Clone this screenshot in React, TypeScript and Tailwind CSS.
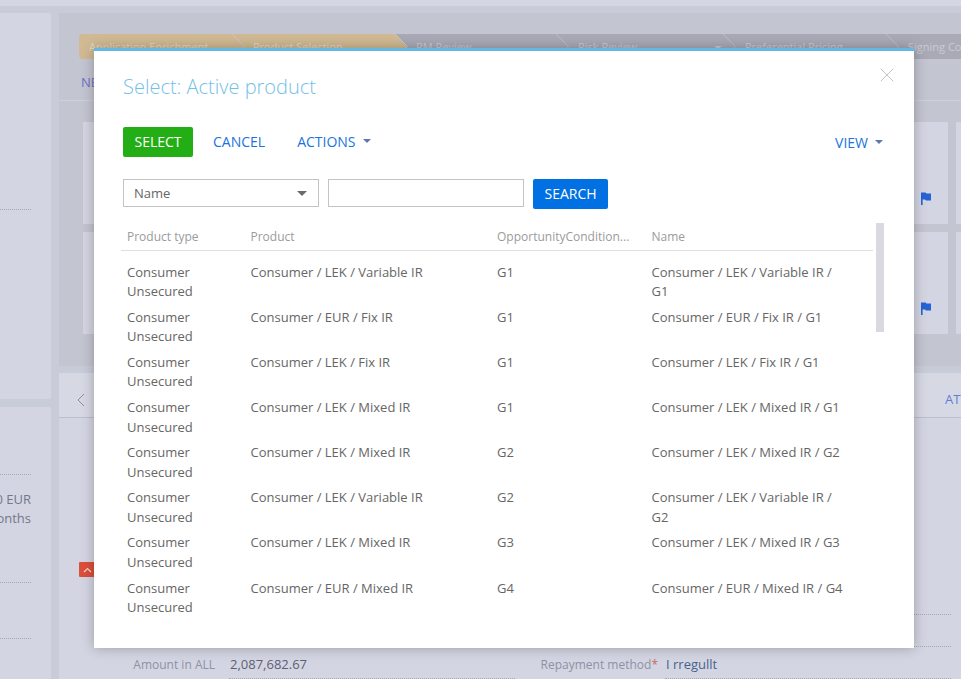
import { X } from 'lucide-react';

const rows = [
  { product: 'Consumer / LEK / Variable IR', cond: 'G1', name: 'Consumer / LEK / Variable IR / G1' },
  { product: 'Consumer / EUR / Fix IR', cond: 'G1', name: 'Consumer / EUR / Fix IR / G1' },
  { product: 'Consumer / LEK / Fix IR', cond: 'G1', name: 'Consumer / LEK / Fix IR / G1' },
  { product: 'Consumer / LEK / Mixed IR', cond: 'G1', name: 'Consumer / LEK / Mixed IR / G1' },
  { product: 'Consumer / LEK / Mixed IR', cond: 'G2', name: 'Consumer / LEK / Mixed IR / G2' },
  { product: 'Consumer / LEK / Variable IR', cond: 'G2', name: 'Consumer / LEK / Variable IR / G2' },
  { product: 'Consumer / LEK / Mixed IR', cond: 'G3', name: 'Consumer / LEK / Mixed IR / G3' },
  { product: 'Consumer / EUR / Mixed IR', cond: 'G4', name: 'Consumer / EUR / Mixed IR / G4' },
];

const stages = [
  { label: 'Application Enrichment', box: 'w-[153px] pl-[10px] z-[6]', done: true },
  { label: 'Product Selection', box: 'w-[163px] pl-[21px] z-[5]', done: true },
  { label: 'RM Review', box: 'w-[161px] pl-[21px] z-[4]', done: false },
  { label: 'Risk Review', box: 'w-[167px] pl-[22px] z-[3]', done: false, menu: true },
  { label: 'Preferential Pricing', box: 'w-[163px] pl-[22px] z-[2]', done: false },
  { label: 'Signing Conditions', box: 'w-[170px] pl-[22px] z-[1]', done: false },
];

const Caret = ({ className }: { className: string }) => (
  <span className={`w-0 h-0 border-x-[4px] border-x-transparent border-t-[4px] ${className}`} />
);

const Flag = () => (
  <svg width="12" height="13" viewBox="0 0 12 13" className="absolute right-[16px] bottom-[19px]">
    <path d="M1 0.5h4.5l1 1H11v7H6l-1-1H2.6V13H1z" fill="#2563d6" />
  </svg>
);

const Card = ({ flag }: { flag?: boolean }) => (
  <div className="relative w-[210.25px] h-[102px] shrink-0 bg-[#d3d6e2]">{flag && <Flag />}</div>
);

export default function App() {
  return (
    <div className="relative w-[961px] h-[679px] overflow-hidden bg-[#c8ccd9] font-['Open_Sans',sans-serif] text-[13px]">
      {/* barra superior */}
      <div className="h-[6px] bg-[#d4d7e3]" />

      <div className="flex h-[673px] pt-[7px]">
        {/* columna izquierda */}
        <aside className="w-[51px] shrink-0 flex flex-col gap-[8px] text-[#74778a]">
          <div className="h-[386px] bg-[#d3d6e2] rounded-r-[2px] pt-[196px]">
            <div className="w-[31px] border-b border-dotted border-[#a5a8b6]" />
          </div>
          <div className="h-[272px] bg-[#d3d6e2] rounded-r-[2px] pt-[67px] overflow-hidden">
            <div className="w-[31px] border-b border-dotted border-[#a5a8b6]" />
            <div className="w-[31px] flex flex-col items-end mt-[15px] leading-[19px] whitespace-nowrap">
              <span>20,000 EUR</span>
              <span>60 months</span>
            </div>
            <div className="w-[31px] border-b border-dotted border-[#a5a8b6] mt-[54px]" />
            <div className="w-[31px] border-b border-dotted border-[#a5a8b6] mt-[55px]" />
          </div>
        </aside>

        <main className="ml-[8px] flex-1 min-w-0 flex flex-col gap-[7px]">
          {/* bloque superior */}
          <section className="h-[353px] bg-[#c3c5d1] overflow-hidden">
            <div className="isolate flex h-[25px] mt-[21px] ml-[20px] w-[1000px] rounded-l-[4px] overflow-hidden text-[11px]">
              {stages.map((stage) => (
                <div
                  key={stage.label}
                  className={`${stage.box} relative shrink-0 flex items-center leading-[25px] whitespace-nowrap ${
                    stage.done ? 'bg-[#d1ba93] text-[#e2d8c6]' : 'bg-[#a9aab6] text-[#c9cad3]'
                  }`}
                >
                  {stage.label}
                  {stage.menu && (
                    <span className="absolute right-[1px] top-[12px] w-0 h-0 border-x-[4px] border-x-transparent border-t-[3px] border-t-[#c9cad3]" />
                  )}
                  <svg width="14" height="25" viewBox="0 0 14 25" className="absolute left-full top-0">
                    <path
                      d="M0 0 12.5 12.5 0 25"
                      fill={stage.done ? '#d1ba93' : '#a9aab6'}
                      stroke={stage.done ? '#c9c8c4' : '#bcbdc8'}
                      strokeWidth="1"
                    />
                  </svg>
                </div>
              ))}
            </div>
            <div className="h-[42px] pt-[6px] pl-[22px] flex items-center text-[#6f72c8] border-b border-[#cdd0db]">
              NEXT STEPS
            </div>
            <div className="flex gap-[8px] ml-[24px] mt-[21px]">
              <Card />
              <Card />
              <Card />
              <Card flag />
              <Card />
            </div>
            <div className="flex gap-[8px] ml-[24px] mt-[8px]">
              <Card />
              <Card />
              <Card />
              <Card flag />
              <Card />
            </div>
          </section>

          {/* bloque inferior */}
          <section className="flex-1 bg-[#d3d6e2] text-[#74778a]">
            <div className="h-[45px] pt-[9px] flex items-center justify-between pl-[18px] border-b border-[#bcbfcd] bg-[#d6d9e4]">
              <svg width="8" height="14" viewBox="0 0 8 14" fill="none" stroke="#8b8e9e" strokeWidth="1">
                <path d="M7 1 1 7l6 6" />
              </svg>
              <span className="w-[16px] overflow-hidden whitespace-nowrap text-[#5f7fd6]">ATTACHMENTS</span>
            </div>
            <div className="h-[235px] flex justify-end pr-[10px]">
              <div className="w-[37px] flex flex-col">
                <div className="mt-[196px] border-b border-dotted border-[#a5a8b6]" />
                <div className="mt-[31px] border-b border-dotted border-[#a5a8b6]" />
              </div>
            </div>
            <div className="flex h-[26px] items-start leading-[22px]">
              <span className="w-[156px] pt-[1px] text-right text-[12px] text-[#8e91a4]">Amount in ALL</span>
              <span className="ml-[14px] w-[286px] h-[26px] pl-[1px] text-[#5d6074] border-b border-dotted border-[#a5a8b6]">
                2,087,682.67
              </span>
              <span className="w-[143px] pt-[1px] text-right text-[12px] text-[#8e91a4]">
                Repayment method<span className="text-[#c96a5a]">*</span>
              </span>
              <span className="ml-[7px] w-[286px] h-[26px] pl-[1px] text-[#4c5f8c] border-b border-dotted border-[#a5a8b6]">
                I rregullt
              </span>
            </div>
          </section>
        </main>
      </div>

      {/* boton rojo detras del modal */}
      <div className="absolute left-[79px] top-[562px] w-[16px] h-[15px] bg-[#dc4f3a] rounded-[1px] flex items-center justify-center">
        <svg width="9" height="6" viewBox="0 0 9 6" fill="none" stroke="#f7d9d3" strokeWidth="1.2">
          <path d="M1 5l3.5-3.5L8 5" />
        </svg>
      </div>

      {/* modal */}
      <div className="absolute left-[94px] top-[48px] w-[820px] h-[600px] bg-white border-t-[3px] border-[#63b7e2] shadow-[0_0_12px_rgba(0,0,0,0.28)] pl-[29px] pr-[30px]">
        <X className="absolute right-[15px] top-[12px] w-[24px] h-[24px] text-[#c4c4c4]" strokeWidth={1} />

        <h1 className="pt-[22px] text-[20px] leading-[28px] font-light text-[#74c0e8]">Select: Active product</h1>

        <div className="flex items-center mt-[26px] h-[30px] text-[14px] text-[#1a73e0]">
          <button className="w-[70px] h-[30px] pb-[2px] bg-[#23ae15] rounded-[2px] text-white">SELECT</button>
          <button className="ml-[20px] pb-[2px]">CANCEL</button>
          <button className="ml-[32px] pb-[2px] flex items-center gap-[7px]">
            ACTIONS
            <Caret className="border-t-[#5c78ac]" />
          </button>
          <button className="ml-auto mr-[1px] flex items-center gap-[7px]">
            VIEW
            <Caret className="border-t-[#5c78ac]" />
          </button>
        </div>

        <div className="flex items-start mt-[22px] text-[#666]">
          <div className="w-[196px] h-[28px] pt-[1px] border border-[#c4c4c4] flex items-center justify-between pl-[10px] pr-[11px]">
            <span>Name</span>
            <span className="w-0 h-0 border-x-[5px] border-x-transparent border-t-[5px] border-t-[#6b6b6b]" />
          </div>
          <input className="ml-[9px] w-[196px] h-[28px] border border-[#c4c4c4]" />
          <button className="ml-[9px] w-[75px] h-[30px] pb-[2px] bg-[#0070e3] rounded-[2px] text-white text-[14px]">
            SEARCH
          </button>
        </div>

        {/* tabla de productos */}
        <div className="relative mt-[14px] -ml-[2px] w-[752px] text-[#666]">
          <div className="h-[28px] grid grid-cols-[123.5px_246.5px_154.5px_1fr] pl-[6px] items-center border-b border-[#dfdfdf] text-[12px] text-[#9b9b9b]">
            <span>Product type</span>
            <span>Product</span>
            <span>OpportunityCondition...</span>
            <span>Name</span>
          </div>
          <div className="pt-[11.65px]">
            {rows.map((row, i) => (
              <div
                key={i}
                className="grid grid-cols-[123.5px_246.5px_154.5px_1fr] pl-[6px] pr-[24px] pb-[6.15px] leading-[19.5px]"
              >
                <span className="w-[90px]">Consumer Unsecured</span>
                <span>{row.product}</span>
                <span>{row.cond}</span>
                <span>{row.name}</span>
              </div>
            ))}
          </div>
          <div className="absolute left-[755px] top-0 w-[8px] h-[109px] bg-[#d9dae1]" />
        </div>
      </div>
    </div>
  );
}
